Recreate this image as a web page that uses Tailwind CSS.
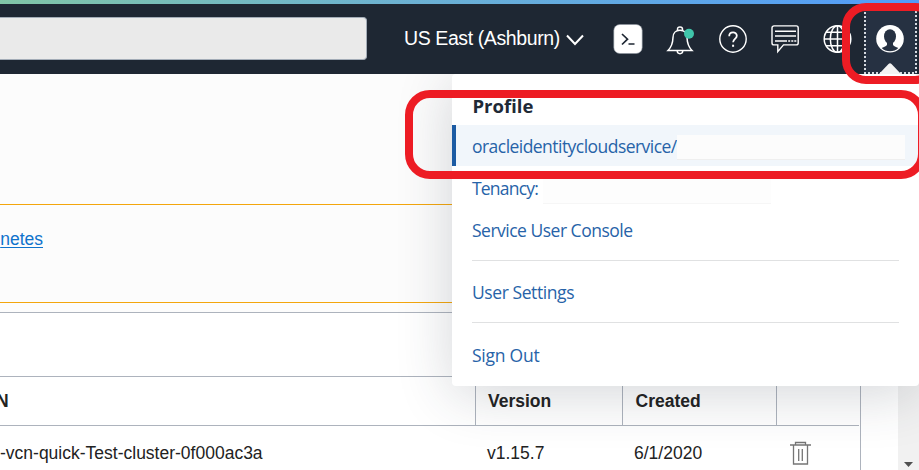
<!DOCTYPE html>
<html lang="en">
<head>
<meta charset="utf-8">
<title>Console profile menu</title>
<script src="https://cdn.jsdelivr.net/npm/@tailwindcss/browser@4"></script>
</head>
<body class="relative w-[919px] h-[470px] overflow-hidden bg-white font-['Liberation_Sans',Arial,sans-serif] text-[#222]">
<div class="flex flex-col h-full">
  <div class="h-1 shrink-0 bg-linear-to-r from-[#81c4a6] via-[#6cb1d3] via-45% to-[#529bfa]"></div>
  <header class="flex items-stretch h-[70px] shrink-0 bg-[#1e2733] text-white">
    <div class="w-[367px] h-[43px] mt-[13px] shrink-0 rounded-r-[4px] border border-l-0 border-[#a3acb7] bg-[#eaeaea]"></div>
    <button class="flex items-center w-[180px] ml-[37px] shrink-0 text-[19.5px] leading-6 whitespace-nowrap">
      <span class="w-[162px] text-left tracking-[-0.4px] pb-0.5">US East (Ashburn)</span>
      <svg class="w-[18px] h-3 shrink-0 mt-0.5" viewBox="0 0 18 12" fill="none" stroke="white" stroke-width="2"><path d="M1 1.500l8 8.500 8-8.500"/></svg>
    </button>
    <svg class="w-[30px] h-[31px] ml-[29px] mt-5 shrink-0" viewBox="0 0 30 31" fill="none"><rect x=".8" y=".5" width="28.4" height="29" rx="6" fill="white" stroke="#8a929c" stroke-width=".6"/><path d="M9 10l5.500 5.200L9 20.500M15.500 20h6" stroke="#1e2733" stroke-width="1.700"/></svg>
    <svg class="w-[30px] h-[32px] ml-[23px] mt-5 shrink-0" viewBox="0 0 30 32" fill="none" stroke="white" stroke-width="1.500"><path d="M2 26.500c3.500-3.500 4.800-7 5-13 0-4.500 2.800-7.200 7-7.200s7 2.700 7 7.200c.2 6 1.500 9.500 5 13zM11.500 6.800V5.200q0-2.200 2.500-2.200t2.500 2.200v1.600M11.200 27c.3 3.500 5.300 3.500 5.600 0"/><circle cx="23" cy="9.800" r="5" fill="#3fc5aa" stroke="none"/></svg>
    <svg class="w-[30px] h-[30px] ml-[22px] mt-5 shrink-0" viewBox="0 0 30 30" fill="none" stroke="white" stroke-width="1.400"><circle cx="15" cy="15" r="13.200"/><path d="M11.200 12.200c0-5 7.600-4.800 7.600-.4 0 3-3.700 3.300-3.700 6.500" stroke-width="1.800"/><path d="M15.100 20.700v2.100" stroke-width="2"/></svg>
    <svg class="w-[30px] h-[32px] ml-[22px] mt-5 shrink-0" viewBox="0 0 30 32" fill="none" stroke="white" stroke-width="1.400"><path d="M4 1.900h22.200a2 2 0 0 1 2 2v15a2 2 0 0 1-2 2H13.500l-5.700 6.800v-6.800H4a2 2 0 0 1-2-2v-15a2 2 0 0 1 2-2z"/><path d="M5 7.200h21M5 12h21M5 17h12M18.200 17h2M21.300 17h2M24.300 17h2"/></svg>
    <svg class="w-[30px] h-[30px] ml-[23px] mt-5 shrink-0" viewBox="0 0 30 30" fill="none" stroke="white" stroke-width="1.500"><circle cx="14.500" cy="15" r="13.300"/><ellipse cx="14.500" cy="15" rx="7.200" ry="13.300"/><path d="M14.500 1.500v27M3 8.300h23M1 15h27M3 21.700h23"/></svg>
    <div class="flex w-[53px] ml-[11px] shrink-0 bg-[#263142]">
      <svg class="w-[53px] h-[70px]" viewBox="0 0 53 70" fill="none"><path d="M1 0v69h51V0" stroke="#d5d9df" stroke-width="2" stroke-dasharray="2 2"/><circle cx="26" cy="34.800" r="13.800" fill="white"/><ellipse cx="26" cy="32.600" rx="6" ry="7.400" fill="#263142"/><path d="M23 37.500h6v3.200c.4 1.600 3 2 5.300 3.200-4 4.300-12.600 4.300-16.600 0 2.300-1.200 4.900-1.600 5.300-3.200z" fill="#263142"/><path d="M15 70l9.500-10q1.500-1.500 3 0L37 70z" fill="#f3f3f3"/></svg>
    </div>
  </header>

  <main class="flex flex-1 min-h-0">
    <div class="flex flex-col w-[898px] shrink-0">
      <div class="h-[130px] bg-[#fcfcfc] shrink-0"></div>
      <div class="h-[99px] shrink-0 border-y border-[#f3a60d] bg-[#fcfcfc] pt-[24px]">
        <a class="block w-[43px] text-right text-[17.5px] leading-5 text-[#0f73cc] underline decoration-1 underline-offset-[2px]">netes</a>
      </div>
      <div class="h-[9px] shrink-0 bg-[#fcfcfc]"></div>
      <div class="w-[861px] h-[158px] shrink-0 flex flex-col border-t border-r border-[#adb3bd]">
        <div class="h-[63px] shrink-0"></div>
        <div class="flex h-[50px] w-[859px] shrink-0 border-y border-[#adb3bd] text-[17.5px] font-bold leading-[48px]">
          <div class="w-[476px] border-r border-[#adb3bd] shrink-0"><div class="-ml-[4px]">N</div></div>
          <div class="w-[147px] border-r border-[#adb3bd] pl-[12px] shrink-0">Version</div>
          <div class="w-[154px] border-r border-[#adb3bd] pl-[12.5px] shrink-0">Created</div>
        </div>
        <div class="flex h-[44px] text-[17.5px] leading-[54px] whitespace-nowrap">
          <div class="w-[487px] shrink-0">-vcn-quick-Test-cluster-0f000ac3a</div>
          <div class="w-[147px] shrink-0">v1.15.7</div>
          <div class="w-[156px] shrink-0">6/1/2020</div>
          <svg class="w-[21px] h-6 mt-[15px] shrink-0" viewBox="0 0 21 24" fill="none" stroke="#757575" stroke-width="1.300"><path d="M0 4h21M5.500 4V1.500h10V4M3.500 4v19h14V4"/><path d="M8.700 8v12M12.300 8v12"/></svg>
        </div>
      </div>
    </div>
    <div class="flex-1 bg-[#f1f1f1] flex items-end justify-center"><svg class="w-[9px] h-5" viewBox="0 0 9 20"><path d="M0 12h9l-4.500 5z" fill="#505050"/></svg></div>
  </main>
</div>

<div class="absolute left-0 top-[74px] w-[919px] h-[396px] overflow-hidden">
  <nav class="flex flex-col w-[467px] h-[312px] ml-[452px] rounded-[4px] bg-white shadow-[0_8px_56px_rgba(40,50,65,0.2)] font-['Open_Sans','Noto_Sans',sans-serif] text-[17.5px] text-[#2763a8] tracking-[-0.42px]">
    <h2 class="h-[51px] pl-[20.5px] pt-[20px] text-[18.5px] leading-6 font-bold text-[#202936] tracking-[0px]">Profile</h2>
    <a class="flex items-center h-[41px] border-l-4 border-[#1c5ba3] bg-[#f1f6fb] pl-[16px] shrink-0"><span class="w-[205px] shrink-0 leading-6 tracking-[-0.54px]">oracleidentitycloudservice/</span><span class="w-[228px] h-[25px] bg-[#fcfcfc] border-b border-[#efefef] shrink-0 mt-[3px]"></span></a>
    <a class="flex h-[44px] pl-[20px] pt-3 shrink-0 leading-6"><span class="w-[71px] -mt-[2px] tracking-[-0.8px]">Tenancy:</span><span class="w-[228px] h-[26px] bg-[#fdfdfd] border-b border-[#f6f6f6]"></span></a>
    <a class="block h-[50px] pl-[20px] pt-[8px] leading-6 shrink-0 tracking-[-0.5px]">Service User Console</a>
    <div class="h-px mx-5 bg-[#e0e1e2] shrink-0"></div>
    <a class="block h-[61px] pl-[20px] pt-[19px] leading-6 shrink-0 tracking-[-0.42px]">User Settings</a>
    <div class="h-px mx-5 bg-[#e0e1e2] shrink-0"></div>
    <a class="block pl-[20px] pt-[20px] leading-6 tracking-[-0.25px]">Sign Out</a>
  </nav>
</div>

<div class="absolute left-[842px] top-[3px] w-[97px] h-[81px] border-8 border-[#ed1c24] rounded-[24px]"></div>
<div class="absolute left-[405px] top-[90px] w-[521px] h-[89px] border-8 border-[#ed1c24] rounded-[25px]"></div>
</body>
</html>
